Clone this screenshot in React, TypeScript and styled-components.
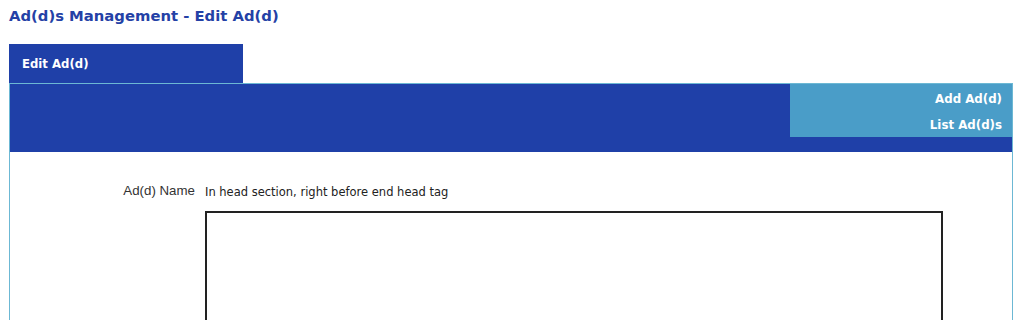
import React, { FC } from 'react';
import styled, { createGlobalStyle } from 'styled-components';

const Global = createGlobalStyle`
	body {
		margin: 0;
		background: #fff;
		font-family: "Liberation Sans", Arial, sans-serif;
	}
`;

const Page = styled.div`
	padding: 7px 11px 0 9px;
`;

const Title = styled.h1`
	margin: 0;
	font-family: "DejaVu Sans", Verdana, sans-serif;
	font-size: 14.8px;
	font-weight: bold;
	line-height: 18px;
	color: #2441a6;
`;

const Tabs = styled.div`
	display: flex;
	margin-top: 19px;
`;

const Tab = styled.div`
	width: 234px;
	height: 39px;
	box-sizing: border-box;
	padding-left: 13px;
	display: flex;
	align-items: center;
	background: #1f40a8;
	color: #fff;
	font-family: "DejaVu Sans", Verdana, sans-serif;
	font-size: 11.7px;
	font-weight: bold;
`;

const Panel = styled.div`
	border: 1px solid #6cb8d4;
	border-bottom: none;
	height: 260px;
`;

const HeaderBar = styled.div`
	height: 68px;
	background: #1f40a8;
	display: flex;
	justify-content: flex-end;
	align-items: flex-start;
`;

const SubMenu = styled.div`
	width: 222px;
	height: 53px;
	background: #4a9dc8;
	display: flex;
	flex-direction: column;
	align-items: flex-end;
	padding: 9px 10px 0 0;
	box-sizing: border-box;
	gap: 13px;
`;

const MenuLink = styled.a`
	color: #fff;
	font-family: "DejaVu Sans", Verdana, sans-serif;
	font-size: 11.8px;
	font-weight: bold;
	line-height: 13px;
	text-decoration: none;
`;

const Form = styled.div`
	display: grid;
	grid-template-columns: 185px 1fr;
	column-gap: 10px;
	row-gap: 11px;
	padding-top: 30px;
`;

const Label = styled.div`
	text-align: right;
	font-size: 13.3px;
	line-height: 16px;
	color: #333;
	padding-top: 1px;
`;

const Value = styled.div`
	font-family: "DejaVu Sans", Tahoma, sans-serif;
	font-size: 11.5px;
	line-height: 16px;
	color: #222;
	padding-top: 2px;
`;

const TextArea = styled.textarea`
	width: 738px;
	height: 140px;
	box-sizing: border-box;
	border: 2px solid #222;
	border-radius: 0;
	outline: none;
	margin: 0;
	padding: 2px;
	resize: none;
	font-family: "Liberation Sans", Arial, sans-serif;
	font-size: 13px;
`;

const App: FC = () => (
	<Page>
		<Global />
		<Title>Ad(d)s Management - Edit Ad(d)</Title>
		<Tabs>
			<Tab>Edit Ad(d)</Tab>
		</Tabs>
		<Panel>
			<HeaderBar>
				<SubMenu>
					<MenuLink href="#">Add Ad(d)</MenuLink>
					<MenuLink href="#">List Ad(d)s</MenuLink>
				</SubMenu>
			</HeaderBar>
			<Form>
				<Label>Ad(d) Name</Label>
				<Value>In head section, right before end head tag</Value>
				<div />
				<TextArea autoFocus />
			</Form>
		</Panel>
	</Page>
);

export default App;
